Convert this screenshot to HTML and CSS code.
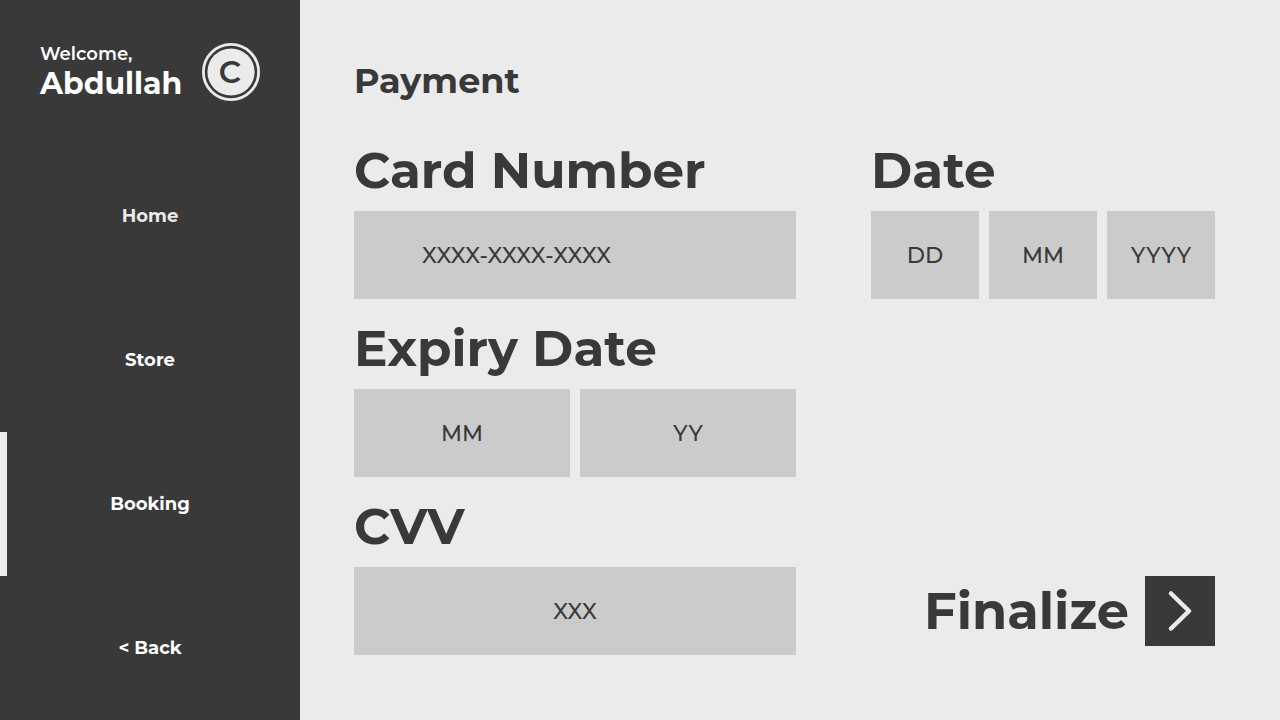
FILE: index.html
```html
<!DOCTYPE html>
<html lang="en">
<head>
  <meta charset="utf-8">
  <meta name="viewport" content="width=device-width, initial-scale=1">
  <title>Payment</title>
  <link rel="stylesheet" href="styles.css">
</head>
<body>
  <div class="app">
    <aside class="sidebar">
      <header class="user">
        <p class="greeting">Welcome,<strong class="user-name">Abdullah</strong></p>
        <svg class="avatar" viewBox="0 0 58 58" role="img" aria-label="C">
          <circle class="avatar-ring" cx="29" cy="29" r="27.6"/>
          <circle class="avatar-disc" cx="29" cy="29" r="23.6"/>
          <text class="avatar-letter" x="28" y="40" text-anchor="middle">C</text>
        </svg>
      </header>
      <nav class="menu">
        <a class="menu-link muted" href="#home">Home</a>
        <a class="menu-link" href="#store">Store</a>
        <a class="menu-link active" href="#booking" aria-current="page">Booking</a>
        <a class="menu-link" href="#back">&lt; Back</a>
      </nav>
    </aside>
    <main class="content">
      <h1 class="title">Payment</h1>
      <form class="form">
        <div class="group">
          <label class="label" for="card">Card Number</label>
          <div class="fields">
            <input class="field field-card" id="card" type="text" inputmode="numeric" placeholder="XXXX-XXXX-XXXX">
          </div>
        </div>
        <div class="group">
          <label class="label" for="day">Date</label>
          <div class="fields">
            <input class="field" id="day" type="text" inputmode="numeric" placeholder="DD" aria-label="Date day">
            <input class="field" type="text" inputmode="numeric" placeholder="MM" aria-label="Date month">
            <input class="field" type="text" inputmode="numeric" placeholder="YYYY" aria-label="Date year">
          </div>
        </div>
        <div class="group group-start">
          <label class="label" for="exp-month">Expiry Date</label>
          <div class="fields">
            <input class="field" id="exp-month" type="text" inputmode="numeric" placeholder="MM" aria-label="Expiry Date month">
            <input class="field" type="text" inputmode="numeric" placeholder="YY" aria-label="Expiry Date year">
          </div>
        </div>
        <div class="group group-start">
          <label class="label" for="cvv">CVV</label>
          <div class="fields">
            <input class="field" id="cvv" type="text" inputmode="numeric" placeholder="XXX">
          </div>
        </div>
        <button class="submit" type="submit">
          Finalize
          <svg class="submit-icon" viewBox="0 0 70 70" aria-hidden="true">
            <path d="M26 17.5 44 35 26 52.5"/>
          </svg>
        </button>
      </form>
    </main>
  </div>
</body>
</html>
```

FILE: styles.css
```css
* {
  box-sizing: border-box;
}

body {
  margin: 0;
  background: #ebebeb;
  color: #393939;
  font-family: Montserrat, Inter, "Open Sans", sans-serif;
}

.app {
  display: flex;
  min-height: 100vh;
}

.sidebar {
  display: grid;
  grid-template-rows: 1fr 4fr;
  flex: 0 0 300px;
  background: #393939;
  color: #fff;
}

.user {
  display: flex;
  align-items: center;
  justify-content: space-between;
  padding: 0 40px;
}

.greeting {
  margin: 0;
  font-size: 18px;
  font-weight: 600;
  line-height: 24px;
}

.user-name {
  display: block;
  font-size: 30px;
  font-weight: 700;
  line-height: 36px;
}

.avatar {
  width: 58px;
}

.avatar-ring {
  fill: none;
  stroke: #ebebeb;
  stroke-width: 2.8;
}

.avatar-disc {
  fill: #ebebeb;
}

.avatar-letter {
  fill: #393939;
  font-size: 31px;
  font-weight: 600;
}

.menu {
  display: grid;
  grid-auto-rows: 1fr;
}

.menu-link {
  display: flex;
  align-items: center;
  justify-content: center;
  border: 0 solid transparent;
  border-width: 0 7px;
  color: #fff;
  font-size: 18px;
  font-weight: 700;
  text-decoration: none;
}

.menu-link.muted {
  color: #ebebeb;
}

.menu-link.active {
  border-left-color: #ebebeb;
}

.content {
  flex: 1;
  min-width: 0;
  padding: 61px 65px 60px 54px;
}

.title {
  margin: 0 0 40px;
  font-size: 35px;
  font-weight: 700;
  line-height: 40px;
}

.form {
  display: grid;
  grid-template-columns: minmax(0, 442fr) minmax(0, 344fr);
  gap: 20px 75px;
}

.group {
  display: grid;
  grid-template-columns: minmax(0, 1fr);
  gap: 10px;
}

.group-start {
  grid-column: 1;
}

.label {
  font-size: 50px;
  font-weight: 700;
  line-height: 60px;
  white-space: nowrap;
}

.fields {
  display: flex;
  gap: 10px;
}

.field {
  flex: 1;
  min-width: 0;
  height: 88px;
  padding: 0;
  border: 0;
  border-radius: 0;
  background: #cbcbcb;
  color: #393939;
  font: inherit;
  font-size: 22px;
  font-weight: 500;
  text-align: center;
}

.field::placeholder {
  color: #393939;
  opacity: 1;
}

.field-card {
  padding: 0 68px;
  text-align: left;
}

.submit {
  display: flex;
  grid-column: 2;
  align-items: center;
  align-self: end;
  justify-content: flex-end;
  gap: 16px;
  height: 88px;
  padding: 0;
  border: 0;
  background: none;
  color: #393939;
  font: inherit;
  font-size: 51px;
  font-weight: 700;
  cursor: pointer;
}

.submit-icon {
  width: 70px;
  background: #393939;
  fill: none;
  stroke: #ebebeb;
  stroke-width: 4.5;
  stroke-linecap: round;
  stroke-linejoin: round;
}
```
